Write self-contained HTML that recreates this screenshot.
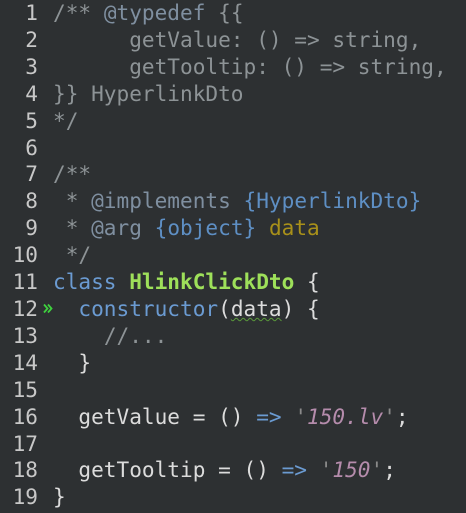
<!DOCTYPE html>
<html><head><style>
html,body{margin:0;padding:0;background:#2d3032;width:466px;height:513px;overflow:hidden}
pre{margin:0;font-family:"DejaVu Sans Mono","Liberation Mono",monospace;font-size:21.1px;line-height:26.9px;color:#dcdcdc;position:absolute;top:0}
#ln{left:0;width:38px;text-align:right;color:#c8c8c8}
#code{left:53px}
.c{color:#8d9396}.t{color:#7f8fa0}.ty{color:#5e8fc4}.p{color:#a8901a}
.k{color:#6b9bd2}.cl{color:#9ee05a;font-weight:bold}.s{color:#b58cac;font-style:italic}.q{color:#8a8a8a}
.u{text-decoration:underline wavy #5a9a3a;text-decoration-thickness:1px}
#arr{position:absolute;left:43px;top:303px}
</style></head><body>
<pre id="ln">1
2
3
4
5
6
7
8
9
10
11
12
13
14
15
16
17
18
19</pre>
<svg id="arr" width="10" height="11" viewBox="0 0 10 11"><path d="M1 1.5L4.5 5.5L1 9.5M5 1.5L8.5 5.5L5 9.5" fill="none" stroke="#3ed23e" stroke-width="1.8"/></svg>
<pre id="code"><span class="c">/** <span class="t">@typedef</span> {{
      getValue: () =&gt; string,
      getTooltip: () =&gt; string,
}} HyperlinkDto
*/</span>

<span class="c">/**
 * <span class="t">@implements</span> <span class="ty">{HyperlinkDto}</span>
 * <span class="t">@arg</span> <span class="ty">{object}</span> <span class="p">data</span>
 */</span>
<span class="k">class</span> <span class="cl">HlinkClickDto</span> {
  <span class="k">constructor</span>(<span class="u">data</span>) {
    <span class="c">//...</span>
  }

  getValue = () <span class="k">=&gt;</span> <span class="q">'</span><span class="s">150.lv</span><span class="q">'</span>;

  getTooltip = () <span class="k">=&gt;</span> <span class="q">'</span><span class="s">150</span><span class="q">'</span>;
}</pre>
</body></html>
